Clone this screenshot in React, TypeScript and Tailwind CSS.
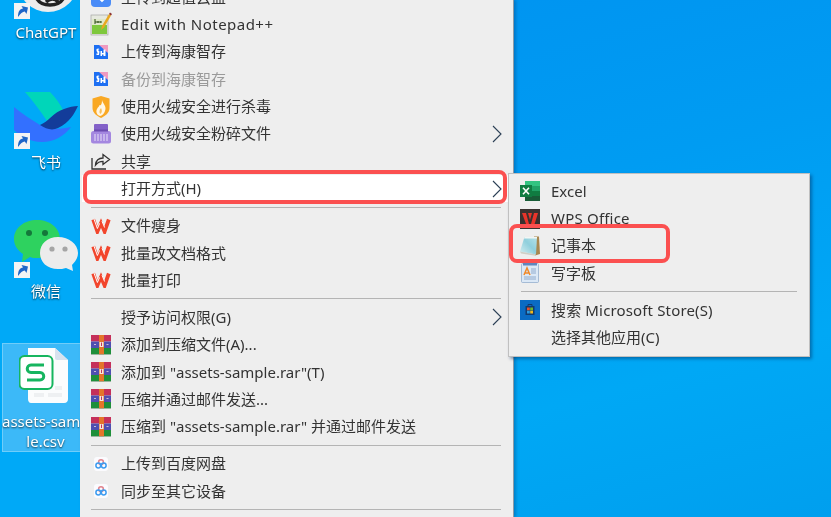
import React from 'react';

const CJK = 'font-["Noto_Sans","Noto_Sans_CJK_SC",sans-serif]';

const ShortcutArrow = () => (
  <svg width="16" height="16" viewBox="0 0 16 16" className="absolute left-[14px] bottom-[-3px]">
    <rect width="16" height="16" fill="#f4f4f4" />
    <path d="M4 14 C4 8 6 6 9 5.5 L7.5 3 L14 4.5 L12.5 11 L10.8 8.6 C8.5 9 6.5 10.5 4 14 Z" fill="#1f66c8" />
  </svg>
);

const ChatGptIcon = () => (
  <svg width="70" height="56" viewBox="0 0 70 56" className="absolute left-[8px] top-0">
    <circle cx="40" cy="22" r="30" fill="#ececec" />
    <path d="M29 39 C34 47 50 47 55 39 M38 42 C42 38 47 38 50 42" fill="none" stroke="#222" strokeWidth="3.4" />
  </svg>
);

const FeishuIcon = () => (
  <svg width="64" height="54" viewBox="0 0 64 54" className="absolute left-[14px] top-0">
    <path d="M11 2 L36 2 C42 8 46 14 49 20 C42 22 38 26 33 31 C26 20 18 10 11 2 Z" fill="#00d6b9" />
    <path d="M0 17 C8 24 18 30 26 35 C34 39 44 40 57 37 C50 46 40 52 28 52 C16 52 6 46 0 40 Z" fill="#3370ff" />
    <path d="M26 35 C34 32 40 22 50 19 C55 17 60 16 64 16 C60 24 56 32 44 38 C38 41 32 39 26 35 Z" fill="#133c9a" />
  </svg>
);

const WeChatIcon = () => (
  <svg width="64" height="56" viewBox="0 0 64 56" className="absolute left-[14px] top-0">
    <path d="M23 1 C36 1 46 9 46 20 C46 31 36 39 23 39 C20 39 18 39 16 38 L8 43 L9 35 C3 31 0 26 0 20 C0 9 10 1 23 1 Z" fill="#2ed25f" />
    <circle cx="15" cy="14" r="3" fill="#14783a" />
    <circle cx="31" cy="14" r="3" fill="#14783a" />
    <path d="M44 18 C55 18 64 25 64 34 C64 39 61 43 58 46 L59 52 L52 49 C49 50 47 50 44 50 C33 50 26 43 26 34 C26 25 33 18 44 18 Z" fill="#ececec" />
    <circle cx="38" cy="30" r="2.6" fill="#a5a5a5" />
    <circle cx="51" cy="30" r="2.6" fill="#a5a5a5" />
  </svg>
);

const CsvIcon = () => (
  <svg width="52" height="58" viewBox="0 0 52 58" className="ml-[16px] block">
    <path d="M9 1 H36 L49 13 V52 C49 54 48 56 45 56 H12 C10 56 9 54 9 52 Z" fill="#fbfcfd" />
    <path d="M36 1 L49 13 H38 C36.5 13 36 12 36 11 Z" fill="#d7e2ee" />
    <rect x="0.5" y="9" width="33" height="33" rx="5" fill="#fff" stroke="#16b55f" strokeWidth="2" />
    <path d="M25 18 H12 C7 18 7 25.5 12 25.5 H21 C26 25.5 26 33 21 33 H8" fill="none" stroke="#16b55f" strokeWidth="3" />
    <rect x="36" y="39" width="7" height="4" fill="#eef0f2" />
    <rect x="15" y="46" width="10" height="4" fill="#eef0f2" />
    <rect x="29" y="46" width="14" height="4" fill="#eef0f2" />
  </svg>
);

const Notepad3Icon = () => (
  <svg width="22" height="26" viewBox="0 0 22 26">
    <rect x="1" y="4" width="17" height="20" fill="#e6e9df" stroke="#9a9a9a" strokeWidth="0.6" />
    <rect x="2" y="14" width="15" height="9" fill="#7ec83c" />
    <rect x="2" y="8" width="15" height="6" fill="#dfe8c8" />
    <path d="M5 8 V13 M5 11 H11 M8 10 V12 M11 10 V12" stroke="#2c4a16" strokeWidth="1" />
    <path d="M11 19 L12 15 L19 3 L21 4.5 L14 16.5 Z" fill="#e9a820" />
    <path d="M19 3 L20 1.5 L22 3 L21 4.5 Z" fill="#8a2f2f" />
  </svg>
);

const HikIcon = () => (
  <svg width="14" height="14" viewBox="0 0 14 14">
    <rect width="14" height="14" fill="#1d6ff2" />
    <path d="M5 0 H14 V8 Z" fill="#ef9ac0" />
    <path d="M2.5 4 C4 3 5 3.5 5.5 4 L4 5 L5.5 6.5 L5 10 H2.5 V8.5 H4 L2.5 6 Z M6.5 6 H8 V8 H9.5 V4.5 H11.5 V11 H9.5 V9.5 H8 V11 H6.5 Z" fill="#fff" />
  </svg>
);

const HuorongIcon = () => (
  <svg width="18" height="22" viewBox="0 0 18 22">
    <path d="M9 0 L17.5 2.5 V12 C17.5 17 13 20 9 22 C5 20 0.5 17 0.5 12 V2.5 Z" fill="#f9a823" />
    <path d="M10 4 C11 8 15 10 13 15 C12 18 10 19.5 8 20 C5 19 3.5 16 5 13 C6 11 7 11 7.5 9 C9 10 10 8 10 4 Z" fill="#fff6e4" />
    <path d="M9 12 C10 14 10.5 16 8.5 18 C7 17 7 14.5 9 12 Z" fill="#f9c05c" />
  </svg>
);

const ShredderIcon = () => (
  <svg width="20" height="20" viewBox="0 0 20 20">
    <rect x="3" y="0" width="14" height="7" rx="1" fill="#8361c8" />
    <rect x="0" y="7" width="20" height="12.5" rx="2.5" fill="#a487e0" />
    <path d="M4 10 V17 M7 10 V17 M10 10 V17 M13 10 V17 M16 10 V17" stroke="#e9e0f8" strokeWidth="1" />
    <rect x="3" y="5.5" width="14" height="2" fill="#6b4bb0" />
  </svg>
);

const ShareIcon = () => (
  <svg width="20" height="20" viewBox="0 0 20 20" fill="none" stroke="#333" strokeWidth="1.3">
    <path d="M1 7 V18 H15" />
    <path d="M4.5 14 C5 9.5 8 7 12 7 V3.5 L18.5 8.5 L12 13.5 V10.3 C9 10.3 6.5 11.5 4.5 14 Z" />
  </svg>
);

const WpsIcon = () => (
  <svg width="20" height="16" viewBox="0 0 20 16" fill="none">
    <path d="M2.2 1.5 L6.4 13.5 L10 5 L13.6 13.5 L17.8 1.5" stroke="#f2452c" strokeWidth="3.8" />
    <path d="M3 1 L6.4 10.5 L8.6 5.4 M11 3.2 L13.6 9.5" stroke="#fff" strokeWidth="1" />
  </svg>
);

const RarIcon = () => (
  <svg width="20" height="20" viewBox="0 0 20 20">
    <rect x="0" y="0" width="20" height="6.5" fill="#c5305a" />
    <rect x="0" y="6.5" width="20" height="6.5" fill="#4f4fb0" />
    <rect x="0" y="13" width="20" height="6.5" fill="#1e8f3a" />
    <rect x="8" y="0" width="5" height="19.5" fill="#e4752a" />
    <rect x="8.5" y="7" width="4" height="5" fill="#f4e8dc" />
    <rect x="10" y="7.5" width="1" height="3.5" fill="#c5305a" />
    <rect x="0" y="19.5" width="20" height="0.5" fill="#aaa" />
    <path d="M3 9.5 H5 M15.5 9.5 H17.5" stroke="#c9b9d8" strokeWidth="1" />
  </svg>
);

const BaiduIcon = () => (
  <svg width="14" height="14" viewBox="0 0 14 14" fill="none">
    <rect width="14" height="14" rx="3" fill="#fbfbfe" />
    <circle cx="7" cy="5.2" r="2.4" stroke="#e0848e" strokeWidth="1.5" />
    <circle cx="4.3" cy="8.5" r="2.4" stroke="#3d9cf0" strokeWidth="1.5" />
    <circle cx="9.7" cy="8.5" r="2.4" stroke="#3d9cf0" strokeWidth="1.5" />
  </svg>
);

const ExcelIcon = () => (
  <svg width="20" height="20" viewBox="0 0 20 20">
    <rect x="5" y="0" width="15" height="20" fill="#21a366" />
    <rect x="5" y="0" width="15" height="5" fill="#33c481" />
    <rect x="5" y="10" width="15" height="5" fill="#107c41" />
    <rect x="5" y="15" width="15" height="5" fill="#185c37" />
    <rect x="0" y="4" width="12" height="12" fill="#107c41" />
    <path d="M3 6.8 L9 13.2 M9 6.8 L3 13.2" stroke="#fff" strokeWidth="1.6" />
  </svg>
);

const WpsOfficeIcon = () => (
  <svg width="20" height="20" viewBox="0 0 20 20">
    <rect width="20" height="20" fill="#3a3230" />
    <path d="M2 4 H6 L9 15 H6 Z M8 4 H12 L10 11 Z M11 15 L14 4 H18 L14 17 H11 Z" fill="#e8342a" />
  </svg>
);

const NotepadIcon = () => (
  <svg width="20" height="20" viewBox="0 0 20 20">
    <defs>
      <linearGradient id="padFace" x1="0" y1="1" x2="1" y2="0">
        <stop offset="0" stopColor="#d6eef0" />
        <stop offset="0.55" stopColor="#8fcfdc" />
        <stop offset="1" stopColor="#b7e2e8" />
      </linearGradient>
    </defs>
    <path d="M14 0.5 H19 L20 18 L15 19.5 Z" fill="#a8874f" />
    <path d="M4.5 1 H17 L16 18.5 L0 15.5 Z" fill="url(#padFace)" />
    <path d="M4.5 1 H17 L17 2.5 L4 2.5 Z" fill="#f2f6f4" />
    <path d="M0 15.5 L16 18.5 L15.5 19.8 L1 17.5 Z" fill="#cfcfc6" />
  </svg>
);

const WordpadIcon = () => (
  <svg width="18" height="20" viewBox="0 0 18 20">
    <rect x="0.5" y="0.5" width="17" height="19" rx="1" fill="#dbe8f6" stroke="#8aa6c8" strokeWidth="0.7" />
    <rect x="2" y="0" width="14" height="2.5" fill="#5f86bd" />
    <path d="M3 12 L6 5 L9 12 M4 10 H8" stroke="#f0892a" strokeWidth="1.5" fill="none" />
    <path d="M10 6 H15 M10 8 H15 M10 10 H15 M3 14 H15 M3 16 H15" stroke="#7e9cc4" strokeWidth="0.8" />
  </svg>
);

const StoreIcon = () => (
  <svg width="20" height="20" viewBox="0 0 20 20">
    <rect width="20" height="20" fill="#0a6bc4" />
    <path d="M5.5 6 H14.5 V15 H5.5 Z" fill="#123a6e" />
    <path d="M8 6 V4.5 H12 V6" stroke="#123a6e" strokeWidth="1" fill="none" />
    <rect x="7" y="7.5" width="2.8" height="2.8" fill="#e8502a" />
    <rect x="10.2" y="7.5" width="2.8" height="2.8" fill="#6cb82c" />
    <rect x="7" y="10.7" width="2.8" height="2.8" fill="#2a9be0" />
    <rect x="10.2" y="10.7" width="2.8" height="2.8" fill="#f2b81c" />
  </svg>
);

const TopIcon = () => (
  <svg width="20" height="20" viewBox="0 0 20 20">
    <rect width="20" height="20" rx="4" fill="#4a8cf7" />
    <path d="M7 10 L11 14 L14 11" stroke="#fff" strokeWidth="1.8" fill="none" />
  </svg>
);

const Chevron = () => (
  <svg width="10" height="18" viewBox="0 0 10 18" fill="none" stroke="#2b3f55" strokeWidth="1.1" className="absolute right-[11px] top-1/2 -translate-y-1/2">
    <path d="M1 1 L9 9 L1 17" />
  </svg>
);

type Item = { label?: string; icon?: React.ReactNode; more?: boolean; dim?: boolean; active?: boolean; sep?: boolean; cls?: string };

const menuItems: Item[] = [
  { label: '上传到超值云盘', icon: <TopIcon /> },
  { label: 'Edit with Notepad++', icon: <Notepad3Icon />, cls: 'tracking-[0.48px]' },
  { label: '上传到海康智存', icon: <HikIcon /> },
  { label: '备份到海康智存', icon: <HikIcon />, dim: true },
  { label: '使用火绒安全进行杀毒', icon: <HuorongIcon /> },
  { label: '使用火绒安全粉碎文件', icon: <ShredderIcon />, more: true },
  { label: '共享', icon: <ShareIcon /> },
  { label: '打开方式(H)', more: true, active: true },
  { sep: true },
  { label: '文件瘦身', icon: <WpsIcon /> },
  { label: '批量改文档格式', icon: <WpsIcon /> },
  { label: '批量打印', icon: <WpsIcon /> },
  { sep: true },
  { label: '授予访问权限(G)', more: true },
  { label: '添加到压缩文件(A)...', icon: <RarIcon /> },
  { label: '添加到 "assets-sample.rar"(T)', icon: <RarIcon /> },
  { label: '压缩并通过邮件发送...', icon: <RarIcon /> },
  { label: '压缩到 "assets-sample.rar" 并通过邮件发送', icon: <RarIcon /> },
  { sep: true },
  { label: '上传到百度网盘', icon: <BaiduIcon /> },
  { label: '同步至其它设备', icon: <BaiduIcon /> },
  { sep: true },
];

const subItems: Item[] = [
  { label: 'Excel', icon: <ExcelIcon /> },
  { label: 'WPS Office', icon: <WpsOfficeIcon />, cls: 'tracking-[0.2px]' },
  { label: '记事本', icon: <NotepadIcon /> },
  { label: '写字板', icon: <WordpadIcon /> },
  { sep: true },
  { label: '搜索 Microsoft Store(S)', icon: <StoreIcon />, cls: 'tracking-[0.15px]' },
  { label: '选择其他应用(C)' },
];

const Separator = () => (
  <div className="h-[9.7px] flex items-center pl-[11px] pr-[12px]">
    <div className="h-px w-full bg-[#b4b4b4]" />
  </div>
);

const MenuRow = ({ item }: { item: Item }) => (
  <div className={`relative flex items-center h-[27.36px] ${item.active ? 'ml-[2px] bg-white' : ''}`}>
    <div className={`shrink-0 flex items-center justify-center ${item.active ? 'w-[39px]' : 'w-[41px]'}`}>{item.icon}</div>
    <span className={`text-[15px] leading-none whitespace-nowrap ${item.dim ? 'text-[#9a9a9a]' : 'text-[#333333]'} ${item.cls ?? ''}`}>{item.label}</span>
    {item.more && <Chevron />}
    {item.active && <div className="absolute left-[1px] right-[6px] top-[-5.4px] bottom-[-1.8px] border-[4px] border-[#fb5050] rounded-[8px]" />}
  </div>
);

const Shortcut = ({ icon, label }: { icon: React.ReactNode; label: string }) => (
  <div className="h-[129.3px] shrink-0">
    <div className="relative h-[56px]">
      {icon}
      <ShortcutArrow />
    </div>
    <div className="mt-[6px] text-center text-white text-[15px] leading-5 [text-shadow:0_1px_2px_rgba(0,0,0,0.75)]">{label}</div>
  </div>
);

export default function App() {
  return (
    <div className={`relative w-[831px] h-[517px] overflow-hidden flex bg-[linear-gradient(165deg,#0090f0_0%,#009cf2_45%,#00a8f5_75%,#009fee_100%)] blur-[0.35px] ${CJK}`}>
      {/* desktop icons, cut off by the menu */}
      <div className="w-[80px] shrink-0 overflow-hidden bg-[#00a9f7]">
        <div className="w-[92px] flex flex-col -mt-[39.6px]">
          <Shortcut icon={<ChatGptIcon />} label="ChatGPT" />
          <Shortcut icon={<FeishuIcon />} label="飞书" />
          <Shortcut icon={<WeChatIcon />} label="微信" />
          <div className="-mt-[5.5px] ml-[2px] h-[109px] pt-[3px] bg-[#3cb9f8] border border-[#6fcdf9]">
            <CsvIcon />
            <div className="mt-[6px] -ml-[1px] text-white text-[15px] leading-5 [text-shadow:0_1px_2px_rgba(0,0,0,0.75)]">
              <div className="whitespace-nowrap">assets-sam</div>
              <div className="w-[87px] text-center">le.csv</div>
            </div>
          </div>
        </div>
      </div>

      {/* main context menu */}
      <div className="w-[434px] shrink-0 bg-[#eeeeee] border-r border-[#8c9aa6] overflow-hidden shadow-[2px_0_3px_rgba(0,60,120,0.35)]">
        <div className="-mt-[16.6px]">
          {menuItems.map((item, i) => (item.sep ? <Separator key={i} /> : <MenuRow key={i} item={item} />))}
        </div>
      </div>

      {/* open-with submenu */}
      <div className="absolute left-[508px] top-[173px] w-[302px] h-[184px] pt-[3.6px] bg-[#eeeeee] border border-[#c0c0c0] shadow-[2px_2px_3px_rgba(0,40,90,0.45)]">
        {subItems.map((item, i) =>
          item.sep ? (
            <div key={i} className="h-[9.7px] flex items-center pl-[12px] pr-[12px]">
              <div className="h-px w-full bg-[#b4b4b4]" />
            </div>
          ) : (
            <div key={i} className="flex items-center h-[27.36px]">
              <div className="w-[42px] shrink-0 flex items-center justify-center">{item.icon}</div>
              <span className={`text-[15px] leading-none whitespace-nowrap text-[#333333] ${item.cls ?? ''}`}>{item.label}</span>
            </div>
          )
        )}
      </div>

      {/* red callout on the notepad entry */}
      <div className="absolute left-[509px] top-[224px] w-[161px] h-[39px] border-[4px] border-[#fb5050] rounded-[8px]" />
    </div>
  );
}
